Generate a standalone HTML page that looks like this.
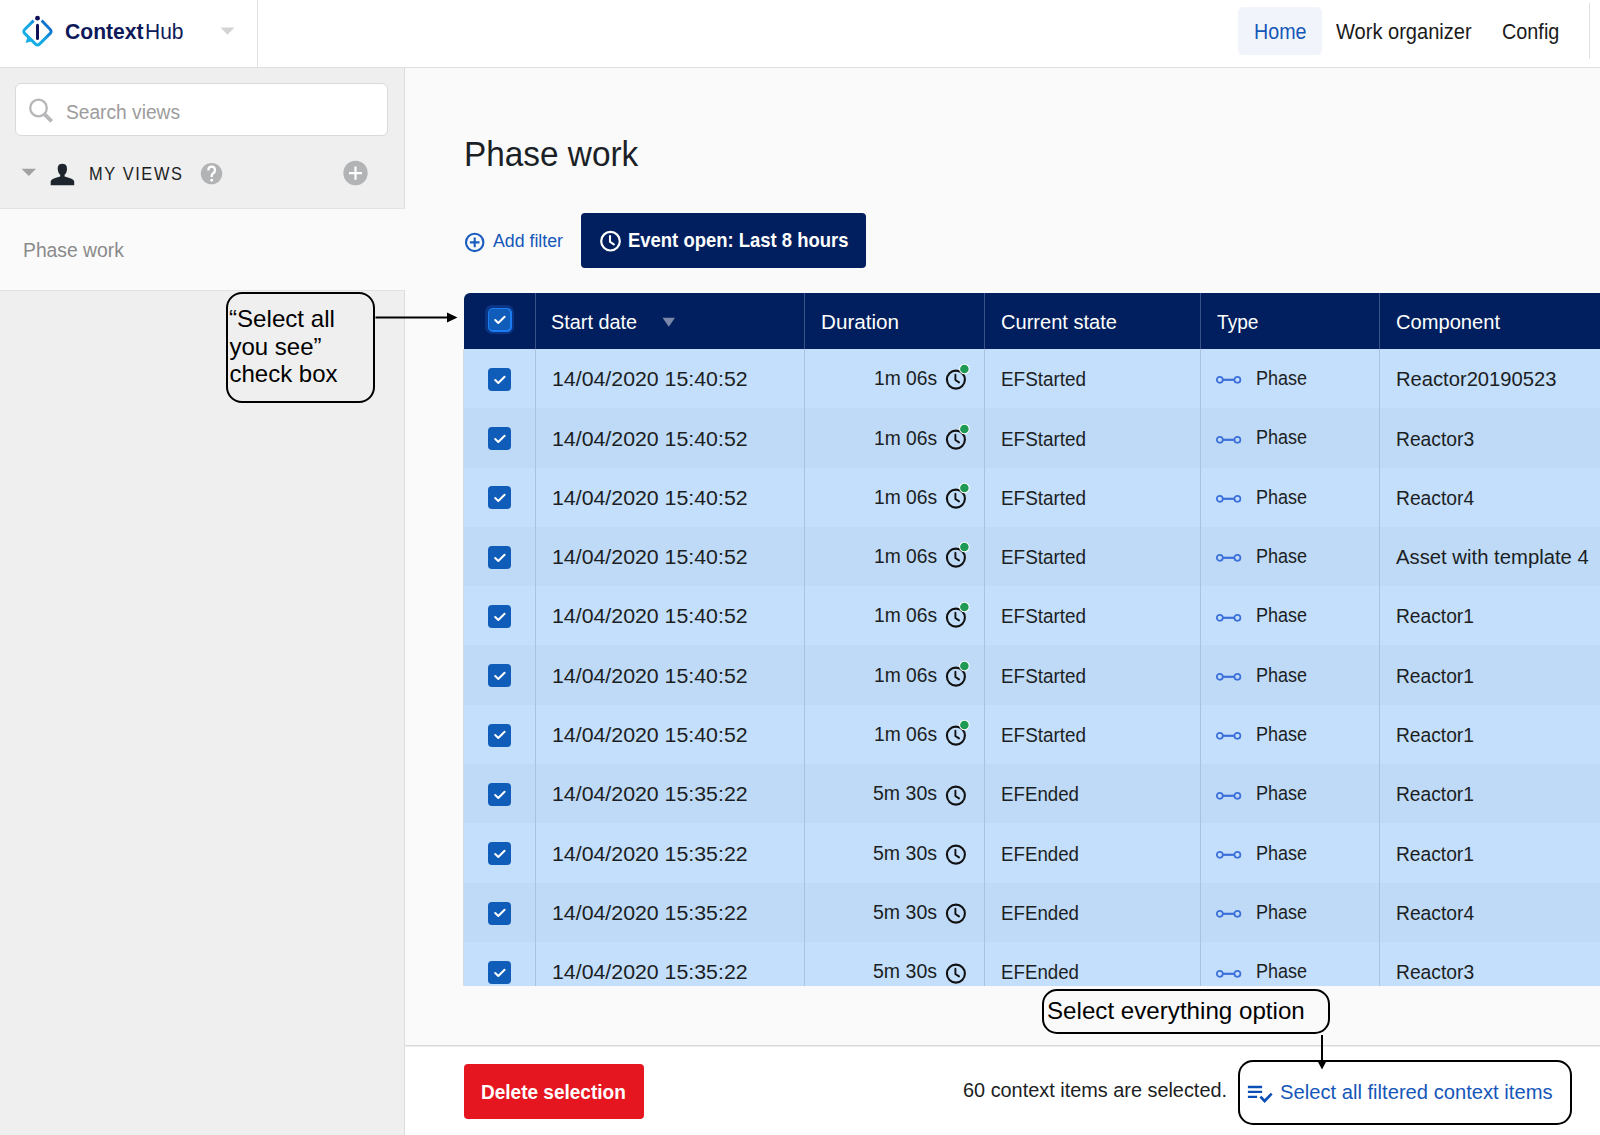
<!DOCTYPE html>
<html><head><meta charset="utf-8"><title>ContextHub - Phase work</title>
<style>
html,body{margin:0;padding:0;}
body{width:1600px;height:1135px;position:relative;overflow:hidden;background:#fafafa;font-family:"Liberation Sans",sans-serif;}
.r{position:absolute;}
.t{position:absolute;line-height:1;white-space:nowrap;transform-origin:0 0;}
svg.r{overflow:visible;}
</style></head><body>
<div class="r" style="left:0px;top:0px;width:1600px;height:67px;background:#ffffff;"></div>
<div class="r" style="left:0px;top:67px;width:1600px;height:1px;background:#dedede;"></div>
<div class="r" style="left:257px;top:0px;width:1px;height:67px;background:#e2e2e2;"></div>
<div class="r" style="left:1589px;top:3px;width:1px;height:56px;background:#e2e2e2;"></div>
<svg class="r" style="left:18px;top:13px" width="40" height="40" viewBox="0 0 40 40">
<defs><linearGradient id="lg" gradientUnits="userSpaceOnUse" x1="6" y1="32" x2="34" y2="4"><stop offset="0" stop-color="#16b4e6"/><stop offset="0.45" stop-color="#13a6e2"/><stop offset="1" stop-color="#0a49bd"/></linearGradient></defs>
<path d="M15.6 7.6 L6.9 16.2 Q4.7 18.4 6.9 20.6 L17.3 30.9 Q19.5 33.1 21.7 30.9 L32 20.6 Q34.2 18.4 32 16.2 L23.6 7.6" fill="none" stroke="url(#lg)" stroke-width="2.9" stroke-linejoin="round"/>
<path d="M9.6 23.6 L7.6 30 L13.8 28.3 Z" fill="#17b0e4"/>
<circle cx="19.5" cy="5.2" r="2.4" fill="#0e1058"/>
<path d="M19.5 12.3 V25.6" stroke="#0e1058" stroke-width="3" stroke-linecap="round"/>
</svg>
<div class="t " style="left:64.50px;top:21.38px;font-size:22px;color:#0e1a5a;font-weight:bold;transform:scaleX(0.9592);">Context</div>
<div class="t " style="left:145.00px;top:21.38px;font-size:22px;color:#0e1a5a;transform:scaleX(0.9537);">Hub</div>
<svg class="r" style="left:220px;top:27px" width="15" height="8"><path d="M0.5 0.5 L14.5 0.5 L7.5 7.8 Z" fill="#d3d3d3"/></svg>
<div class="r" style="left:1238px;top:7px;width:84px;height:48px;background:#f1f5fb;border-radius:5px;"></div>
<div class="t " style="left:1254.00px;top:20.88px;font-size:22px;color:#1556b9;transform:scaleX(0.8938);">Home</div>
<div class="t " style="left:1336.40px;top:20.88px;font-size:22px;color:#1a1a1a;transform:scaleX(0.9118);">Work organizer</div>
<div class="t " style="left:1501.70px;top:20.88px;font-size:22px;color:#1a1a1a;transform:scaleX(0.9012);">Config</div>
<div class="r" style="left:0px;top:68px;width:404px;height:141px;background:#efefef;"></div>
<div class="r" style="left:404px;top:68px;width:1px;height:141px;background:#dcdcdc;"></div>
<div class="r" style="left:0px;top:209px;width:404px;height:81px;background:#fafafa;"></div>
<div class="r" style="left:0px;top:208px;width:405px;height:1px;background:#e2e2e2;"></div>
<div class="r" style="left:0px;top:290px;width:404px;height:845px;background:#efefef;"></div>
<div class="r" style="left:0px;top:290px;width:405px;height:1px;background:#e2e2e2;"></div>
<div class="r" style="left:404px;top:290px;width:1px;height:845px;background:#dcdcdc;"></div>
<div class="r" style="left:15px;top:83px;width:373px;height:53px;background:#ffffff;border:1px solid #dadada;border-radius:6px;box-sizing:border-box;"></div>
<svg class="r" style="left:26px;top:96px" width="30" height="30"><circle cx="12.5" cy="12" r="8.3" fill="none" stroke="#b6b7b9" stroke-width="2.3"/><path d="M17.6 17.3 L25.7 25.4" stroke="#b6b7b9" stroke-width="3.8"/></svg>
<div class="t " style="left:66.00px;top:101.77px;font-size:20px;color:#9c9c9c;transform:scaleX(0.9588);">Search views</div>
<svg class="r" style="left:21px;top:168px" width="16" height="9"><path d="M0.5 0.8 L15 0.8 L7.8 8 Z" fill="#a2a2a2"/></svg>
<svg class="r" style="left:50px;top:163px" width="25" height="23" viewBox="0 0 25 23"><path d="M12.3 0.7 C8.3 0.7 7.6 3.6 7.8 6.4 C8 9 9.2 11 10.2 11.8 L10.2 13.6 C5.6 14.6 1.4 16.4 0.7 18.2 L0.7 22.3 L24.2 22.3 L24.2 18.2 C23.5 16.4 19.3 14.6 14.6 13.6 L14.6 11.8 C15.6 11 16.8 9 17 6.4 C17.2 3.6 16.4 0.7 12.3 0.7 Z" fill="#1f252c"/></svg>
<div class="t " style="left:89.30px;top:166.23px;font-size:17.8px;color:#1b1e23;letter-spacing:1.765px;transform:scaleX(0.9200);">MY VIEWS</div>
<svg class="r" style="left:200px;top:162px" width="24" height="24"><circle cx="11.5" cy="11.6" r="10.7" fill="#b2b3b5"/><path d="M8.3 8.6 Q8.3 4.6 11.6 4.6 Q15 4.6 15 8.2 Q15 10.3 13 11.5 Q11.7 12.4 11.7 14 V15" fill="none" stroke="#fff" stroke-width="2.3"/><circle cx="11.7" cy="18.3" r="1.45" fill="#fff"/></svg>
<svg class="r" style="left:342px;top:160px" width="27" height="27"><circle cx="13.5" cy="13" r="12.2" fill="#b2b3b5"/><path d="M13.5 6.5 V19.7 M7 13.1 H20" stroke="#ffffff" stroke-width="2.2"/></svg>
<div class="t " style="left:23.10px;top:240.45px;font-size:20.5px;color:#8a8a8a;transform:scaleX(0.9420);">Phase work</div>
<div class="r" style="left:405px;top:68px;width:1195px;height:978px;background:#fafafa;"></div>
<div class="t " style="left:464.20px;top:136.37px;font-size:35px;color:#1b1f26;transform:scaleX(0.9527);">Phase work</div>
<svg class="r" style="left:463px;top:231px" width="24" height="24"><circle cx="11.7" cy="11.4" r="8.7" fill="none" stroke="#1a5cbf" stroke-width="2.1"/><path d="M11.7 6.6 V16.2 M6.9 11.4 H16.5" stroke="#1a5cbf" stroke-width="2.1"/></svg>
<div class="t " style="left:493.00px;top:232.26px;font-size:18px;color:#1556b9;transform:scaleX(0.9858);">Add filter</div>
<div class="r" style="left:581px;top:213px;width:285px;height:54.5px;background:#011f5e;border-radius:4px;"></div>
<svg class="r" style="left:598px;top:229px" width="25" height="25"><circle cx="12.5" cy="12.2" r="9.3" fill="none" stroke="#fff" stroke-width="2.2"/><path d="M12 7 V12.8 L15.8 15.4" fill="none" stroke="#fff" stroke-width="2.1" stroke-linecap="round"/></svg>
<div class="t " style="left:628.20px;top:230.15px;font-size:20.5px;color:#ffffff;font-weight:bold;transform:scaleX(0.9005);">Event open: Last 8 hours</div>
<div class="r" style="left:463.6px;top:348px;width:1136.4px;height:60px;background:#c4dffc;"></div>
<div class="r" style="left:463.6px;top:408px;width:1136.4px;height:60px;background:#bfdaf7;"></div>
<div class="r" style="left:463.6px;top:468px;width:1136.4px;height:59px;background:#c4dffc;"></div>
<div class="r" style="left:463.6px;top:527px;width:1136.4px;height:59px;background:#bfdaf7;"></div>
<div class="r" style="left:463.6px;top:586px;width:1136.4px;height:59px;background:#c4dffc;"></div>
<div class="r" style="left:463.6px;top:645px;width:1136.4px;height:60px;background:#bfdaf7;"></div>
<div class="r" style="left:463.6px;top:705px;width:1136.4px;height:59px;background:#c4dffc;"></div>
<div class="r" style="left:463.6px;top:764px;width:1136.4px;height:59px;background:#bfdaf7;"></div>
<div class="r" style="left:463.6px;top:823px;width:1136.4px;height:60px;background:#c4dffc;"></div>
<div class="r" style="left:463.6px;top:883px;width:1136.4px;height:59px;background:#bfdaf7;"></div>
<div class="r" style="left:463.6px;top:942px;width:1136.4px;height:44px;background:#c4dffc;"></div>
<div class="r" style="left:463.6px;top:292.6px;width:1136.4px;height:56.2px;background:#011f5e;border-top-left-radius:6px;"></div>
<div class="r" style="left:463px;top:348.9px;width:1px;height:637.4px;background:#d0dbe6;"></div>
<div class="r" style="left:535px;top:292.6px;width:1px;height:56.2px;background:#3b5287;"></div>
<div class="r" style="left:535px;top:348.9px;width:1px;height:637.4px;background:#a9c3df;"></div>
<div class="r" style="left:804px;top:292.6px;width:1px;height:56.2px;background:#3b5287;"></div>
<div class="r" style="left:804px;top:348.9px;width:1px;height:637.4px;background:#a9c3df;"></div>
<div class="r" style="left:984px;top:292.6px;width:1px;height:56.2px;background:#3b5287;"></div>
<div class="r" style="left:984px;top:348.9px;width:1px;height:637.4px;background:#a9c3df;"></div>
<div class="r" style="left:1200px;top:292.6px;width:1px;height:56.2px;background:#3b5287;"></div>
<div class="r" style="left:1200px;top:348.9px;width:1px;height:637.4px;background:#a9c3df;"></div>
<div class="r" style="left:1379px;top:292.6px;width:1px;height:56.2px;background:#3b5287;"></div>
<div class="r" style="left:1379px;top:348.9px;width:1px;height:637.4px;background:#a9c3df;"></div>
<div class="r" style="left:485px;top:305px;width:29px;height:29px;background:#0a3585;border-radius:7px;"></div>
<div class="r" style="left:487.5px;top:307.5px;width:24px;height:24px;background:#1e7cf2;border-radius:5px;"></div>
<div class="r" style="left:489px;top:309px;width:21px;height:21px;background:#0f5cb9;border-radius:4px;"></div>
<svg class="r" style="left:487.5px;top:307.5px" width="24" height="24"><path d="M7.2 12 L10.3 15 L16.6 8.7" fill="none" stroke="#fff" stroke-width="2" stroke-linecap="round" stroke-linejoin="round"/></svg>
<div class="t " style="left:551.30px;top:311.55px;font-size:20.5px;color:#ffffff;transform:scaleX(0.9677);">Start date</div>
<svg class="r" style="left:662px;top:317px" width="14" height="11"><path d="M0.6 0.8 L13 0.8 L6.8 9.8 Z" fill="#7b87a9"/></svg>
<div class="t " style="left:820.50px;top:311.55px;font-size:20.5px;color:#ffffff;transform:scaleX(1.0066);">Duration</div>
<div class="t " style="left:1000.50px;top:311.55px;font-size:20.5px;color:#ffffff;transform:scaleX(0.9790);">Current state</div>
<div class="t " style="left:1216.50px;top:311.55px;font-size:20.5px;color:#ffffff;transform:scaleX(0.9329);">Type</div>
<div class="t " style="left:1395.50px;top:311.55px;font-size:20.5px;color:#ffffff;transform:scaleX(0.9813);">Component</div>
<div class="r" style="left:488px;top:367.8px;width:23px;height:23px;background:#0f5cb9;border-radius:4px;"></div>
<svg class="r" style="left:487.5px;top:367.60px" width="24" height="24"><path d="M7.2 12 L10.3 15 L16.6 8.7" fill="none" stroke="#fff" stroke-width="2" stroke-linecap="round" stroke-linejoin="round"/></svg>
<div class="t " style="left:552.40px;top:369.25px;font-size:20.5px;color:#1b1e23;transform:scaleX(1.0399);">14/04/2020 15:40:52</div>
<div class="t " style="left:873.50px;top:368.25px;font-size:20.5px;color:#1b1e23;transform:scaleX(0.9399);">1m 06s</div>
<svg class="r" style="left:943px;top:367.40px" width="26" height="26"><circle cx="12.9" cy="12.6" r="9" fill="none" stroke="#111" stroke-width="2.1"/><path d="M12.4 7.8 V13.1 L16 15.4" fill="none" stroke="#111" stroke-width="1.9" stroke-linecap="round"/><circle cx="21.4" cy="2.0" r="5.3" fill="#fff"/><circle cx="21.4" cy="2.0" r="4.3" fill="#1f9a55"/></svg>
<div class="t " style="left:1001.20px;top:369.25px;font-size:20.5px;color:#1b1e23;transform:scaleX(0.9214);">EFStarted</div>
<svg class="r" style="left:1214px;top:374.40px" width="30" height="12"><circle cx="5.8" cy="5.8" r="3" fill="none" stroke="#3b6fd9" stroke-width="1.7"/><circle cx="23.4" cy="5.8" r="3" fill="none" stroke="#3b6fd9" stroke-width="1.7"/><path d="M8.8 5.8 H20.4" stroke="#3b6fd9" stroke-width="2.2"/></svg>
<div class="t " style="left:1256.00px;top:368.05px;font-size:20.5px;color:#1b1e23;transform:scaleX(0.8775);">Phase</div>
<div class="t " style="left:1396.20px;top:369.25px;font-size:20.5px;color:#1b1e23;transform:scaleX(0.9842);">Reactor20190523</div>
<div class="r" style="left:488px;top:427.11px;width:23px;height:23px;background:#0f5cb9;border-radius:4px;"></div>
<svg class="r" style="left:487.5px;top:426.91px" width="24" height="24"><path d="M7.2 12 L10.3 15 L16.6 8.7" fill="none" stroke="#fff" stroke-width="2" stroke-linecap="round" stroke-linejoin="round"/></svg>
<div class="t " style="left:552.40px;top:428.56px;font-size:20.5px;color:#1b1e23;transform:scaleX(1.0399);">14/04/2020 15:40:52</div>
<div class="t " style="left:873.50px;top:427.56px;font-size:20.5px;color:#1b1e23;transform:scaleX(0.9399);">1m 06s</div>
<svg class="r" style="left:943px;top:426.71px" width="26" height="26"><circle cx="12.9" cy="12.6" r="9" fill="none" stroke="#111" stroke-width="2.1"/><path d="M12.4 7.8 V13.1 L16 15.4" fill="none" stroke="#111" stroke-width="1.9" stroke-linecap="round"/><circle cx="21.4" cy="2.0" r="5.3" fill="#fff"/><circle cx="21.4" cy="2.0" r="4.3" fill="#1f9a55"/></svg>
<div class="t " style="left:1001.20px;top:428.56px;font-size:20.5px;color:#1b1e23;transform:scaleX(0.9214);">EFStarted</div>
<svg class="r" style="left:1214px;top:433.71px" width="30" height="12"><circle cx="5.8" cy="5.8" r="3" fill="none" stroke="#3b6fd9" stroke-width="1.7"/><circle cx="23.4" cy="5.8" r="3" fill="none" stroke="#3b6fd9" stroke-width="1.7"/><path d="M8.8 5.8 H20.4" stroke="#3b6fd9" stroke-width="2.2"/></svg>
<div class="t " style="left:1256.00px;top:427.36px;font-size:20.5px;color:#1b1e23;transform:scaleX(0.8775);">Phase</div>
<div class="t " style="left:1396.20px;top:428.56px;font-size:20.5px;color:#1b1e23;transform:scaleX(0.9396);">Reactor3</div>
<div class="r" style="left:488px;top:486.42px;width:23px;height:23px;background:#0f5cb9;border-radius:4px;"></div>
<svg class="r" style="left:487.5px;top:486.22px" width="24" height="24"><path d="M7.2 12 L10.3 15 L16.6 8.7" fill="none" stroke="#fff" stroke-width="2" stroke-linecap="round" stroke-linejoin="round"/></svg>
<div class="t " style="left:552.40px;top:487.87px;font-size:20.5px;color:#1b1e23;transform:scaleX(1.0399);">14/04/2020 15:40:52</div>
<div class="t " style="left:873.50px;top:486.87px;font-size:20.5px;color:#1b1e23;transform:scaleX(0.9399);">1m 06s</div>
<svg class="r" style="left:943px;top:486.02px" width="26" height="26"><circle cx="12.9" cy="12.6" r="9" fill="none" stroke="#111" stroke-width="2.1"/><path d="M12.4 7.8 V13.1 L16 15.4" fill="none" stroke="#111" stroke-width="1.9" stroke-linecap="round"/><circle cx="21.4" cy="2.0" r="5.3" fill="#fff"/><circle cx="21.4" cy="2.0" r="4.3" fill="#1f9a55"/></svg>
<div class="t " style="left:1001.20px;top:487.87px;font-size:20.5px;color:#1b1e23;transform:scaleX(0.9214);">EFStarted</div>
<svg class="r" style="left:1214px;top:493.02px" width="30" height="12"><circle cx="5.8" cy="5.8" r="3" fill="none" stroke="#3b6fd9" stroke-width="1.7"/><circle cx="23.4" cy="5.8" r="3" fill="none" stroke="#3b6fd9" stroke-width="1.7"/><path d="M8.8 5.8 H20.4" stroke="#3b6fd9" stroke-width="2.2"/></svg>
<div class="t " style="left:1256.00px;top:486.67px;font-size:20.5px;color:#1b1e23;transform:scaleX(0.8775);">Phase</div>
<div class="t " style="left:1396.20px;top:487.87px;font-size:20.5px;color:#1b1e23;transform:scaleX(0.9396);">Reactor4</div>
<div class="r" style="left:488px;top:545.73px;width:23px;height:23px;background:#0f5cb9;border-radius:4px;"></div>
<svg class="r" style="left:487.5px;top:545.53px" width="24" height="24"><path d="M7.2 12 L10.3 15 L16.6 8.7" fill="none" stroke="#fff" stroke-width="2" stroke-linecap="round" stroke-linejoin="round"/></svg>
<div class="t " style="left:552.40px;top:547.18px;font-size:20.5px;color:#1b1e23;transform:scaleX(1.0399);">14/04/2020 15:40:52</div>
<div class="t " style="left:873.50px;top:546.18px;font-size:20.5px;color:#1b1e23;transform:scaleX(0.9399);">1m 06s</div>
<svg class="r" style="left:943px;top:545.33px" width="26" height="26"><circle cx="12.9" cy="12.6" r="9" fill="none" stroke="#111" stroke-width="2.1"/><path d="M12.4 7.8 V13.1 L16 15.4" fill="none" stroke="#111" stroke-width="1.9" stroke-linecap="round"/><circle cx="21.4" cy="2.0" r="5.3" fill="#fff"/><circle cx="21.4" cy="2.0" r="4.3" fill="#1f9a55"/></svg>
<div class="t " style="left:1001.20px;top:547.18px;font-size:20.5px;color:#1b1e23;transform:scaleX(0.9214);">EFStarted</div>
<svg class="r" style="left:1214px;top:552.33px" width="30" height="12"><circle cx="5.8" cy="5.8" r="3" fill="none" stroke="#3b6fd9" stroke-width="1.7"/><circle cx="23.4" cy="5.8" r="3" fill="none" stroke="#3b6fd9" stroke-width="1.7"/><path d="M8.8 5.8 H20.4" stroke="#3b6fd9" stroke-width="2.2"/></svg>
<div class="t " style="left:1256.00px;top:545.98px;font-size:20.5px;color:#1b1e23;transform:scaleX(0.8775);">Phase</div>
<div class="t " style="left:1396.20px;top:547.18px;font-size:20.5px;color:#1b1e23;transform:scaleX(0.9895);">Asset with template 4</div>
<div class="r" style="left:488px;top:605.04px;width:23px;height:23px;background:#0f5cb9;border-radius:4px;"></div>
<svg class="r" style="left:487.5px;top:604.84px" width="24" height="24"><path d="M7.2 12 L10.3 15 L16.6 8.7" fill="none" stroke="#fff" stroke-width="2" stroke-linecap="round" stroke-linejoin="round"/></svg>
<div class="t " style="left:552.40px;top:606.49px;font-size:20.5px;color:#1b1e23;transform:scaleX(1.0399);">14/04/2020 15:40:52</div>
<div class="t " style="left:873.50px;top:605.49px;font-size:20.5px;color:#1b1e23;transform:scaleX(0.9399);">1m 06s</div>
<svg class="r" style="left:943px;top:604.64px" width="26" height="26"><circle cx="12.9" cy="12.6" r="9" fill="none" stroke="#111" stroke-width="2.1"/><path d="M12.4 7.8 V13.1 L16 15.4" fill="none" stroke="#111" stroke-width="1.9" stroke-linecap="round"/><circle cx="21.4" cy="2.0" r="5.3" fill="#fff"/><circle cx="21.4" cy="2.0" r="4.3" fill="#1f9a55"/></svg>
<div class="t " style="left:1001.20px;top:606.49px;font-size:20.5px;color:#1b1e23;transform:scaleX(0.9214);">EFStarted</div>
<svg class="r" style="left:1214px;top:611.64px" width="30" height="12"><circle cx="5.8" cy="5.8" r="3" fill="none" stroke="#3b6fd9" stroke-width="1.7"/><circle cx="23.4" cy="5.8" r="3" fill="none" stroke="#3b6fd9" stroke-width="1.7"/><path d="M8.8 5.8 H20.4" stroke="#3b6fd9" stroke-width="2.2"/></svg>
<div class="t " style="left:1256.00px;top:605.29px;font-size:20.5px;color:#1b1e23;transform:scaleX(0.8775);">Phase</div>
<div class="t " style="left:1396.20px;top:606.49px;font-size:20.5px;color:#1b1e23;transform:scaleX(0.9372);">Reactor1</div>
<div class="r" style="left:488px;top:664.35px;width:23px;height:23px;background:#0f5cb9;border-radius:4px;"></div>
<svg class="r" style="left:487.5px;top:664.15px" width="24" height="24"><path d="M7.2 12 L10.3 15 L16.6 8.7" fill="none" stroke="#fff" stroke-width="2" stroke-linecap="round" stroke-linejoin="round"/></svg>
<div class="t " style="left:552.40px;top:665.80px;font-size:20.5px;color:#1b1e23;transform:scaleX(1.0399);">14/04/2020 15:40:52</div>
<div class="t " style="left:873.50px;top:664.80px;font-size:20.5px;color:#1b1e23;transform:scaleX(0.9399);">1m 06s</div>
<svg class="r" style="left:943px;top:663.95px" width="26" height="26"><circle cx="12.9" cy="12.6" r="9" fill="none" stroke="#111" stroke-width="2.1"/><path d="M12.4 7.8 V13.1 L16 15.4" fill="none" stroke="#111" stroke-width="1.9" stroke-linecap="round"/><circle cx="21.4" cy="2.0" r="5.3" fill="#fff"/><circle cx="21.4" cy="2.0" r="4.3" fill="#1f9a55"/></svg>
<div class="t " style="left:1001.20px;top:665.80px;font-size:20.5px;color:#1b1e23;transform:scaleX(0.9214);">EFStarted</div>
<svg class="r" style="left:1214px;top:670.95px" width="30" height="12"><circle cx="5.8" cy="5.8" r="3" fill="none" stroke="#3b6fd9" stroke-width="1.7"/><circle cx="23.4" cy="5.8" r="3" fill="none" stroke="#3b6fd9" stroke-width="1.7"/><path d="M8.8 5.8 H20.4" stroke="#3b6fd9" stroke-width="2.2"/></svg>
<div class="t " style="left:1256.00px;top:664.60px;font-size:20.5px;color:#1b1e23;transform:scaleX(0.8775);">Phase</div>
<div class="t " style="left:1396.20px;top:665.80px;font-size:20.5px;color:#1b1e23;transform:scaleX(0.9372);">Reactor1</div>
<div class="r" style="left:488px;top:723.66px;width:23px;height:23px;background:#0f5cb9;border-radius:4px;"></div>
<svg class="r" style="left:487.5px;top:723.46px" width="24" height="24"><path d="M7.2 12 L10.3 15 L16.6 8.7" fill="none" stroke="#fff" stroke-width="2" stroke-linecap="round" stroke-linejoin="round"/></svg>
<div class="t " style="left:552.40px;top:725.11px;font-size:20.5px;color:#1b1e23;transform:scaleX(1.0399);">14/04/2020 15:40:52</div>
<div class="t " style="left:873.50px;top:724.11px;font-size:20.5px;color:#1b1e23;transform:scaleX(0.9399);">1m 06s</div>
<svg class="r" style="left:943px;top:723.26px" width="26" height="26"><circle cx="12.9" cy="12.6" r="9" fill="none" stroke="#111" stroke-width="2.1"/><path d="M12.4 7.8 V13.1 L16 15.4" fill="none" stroke="#111" stroke-width="1.9" stroke-linecap="round"/><circle cx="21.4" cy="2.0" r="5.3" fill="#fff"/><circle cx="21.4" cy="2.0" r="4.3" fill="#1f9a55"/></svg>
<div class="t " style="left:1001.20px;top:725.11px;font-size:20.5px;color:#1b1e23;transform:scaleX(0.9214);">EFStarted</div>
<svg class="r" style="left:1214px;top:730.26px" width="30" height="12"><circle cx="5.8" cy="5.8" r="3" fill="none" stroke="#3b6fd9" stroke-width="1.7"/><circle cx="23.4" cy="5.8" r="3" fill="none" stroke="#3b6fd9" stroke-width="1.7"/><path d="M8.8 5.8 H20.4" stroke="#3b6fd9" stroke-width="2.2"/></svg>
<div class="t " style="left:1256.00px;top:723.91px;font-size:20.5px;color:#1b1e23;transform:scaleX(0.8775);">Phase</div>
<div class="t " style="left:1396.20px;top:725.11px;font-size:20.5px;color:#1b1e23;transform:scaleX(0.9372);">Reactor1</div>
<div class="r" style="left:488px;top:782.97px;width:23px;height:23px;background:#0f5cb9;border-radius:4px;"></div>
<svg class="r" style="left:487.5px;top:782.77px" width="24" height="24"><path d="M7.2 12 L10.3 15 L16.6 8.7" fill="none" stroke="#fff" stroke-width="2" stroke-linecap="round" stroke-linejoin="round"/></svg>
<div class="t " style="left:552.40px;top:784.42px;font-size:20.5px;color:#1b1e23;transform:scaleX(1.0399);">14/04/2020 15:35:22</div>
<div class="t " style="left:872.50px;top:783.42px;font-size:20.5px;color:#1b1e23;transform:scaleX(0.9518);">5m 30s</div>
<svg class="r" style="left:943px;top:782.57px" width="26" height="26"><circle cx="12.9" cy="12.6" r="9" fill="none" stroke="#111" stroke-width="2.1"/><path d="M12.4 7.8 V13.1 L16 15.4" fill="none" stroke="#111" stroke-width="1.9" stroke-linecap="round"/></svg>
<div class="t " style="left:1000.50px;top:784.42px;font-size:20.5px;color:#1b1e23;transform:scaleX(0.9124);">EFEnded</div>
<svg class="r" style="left:1214px;top:789.57px" width="30" height="12"><circle cx="5.8" cy="5.8" r="3" fill="none" stroke="#3b6fd9" stroke-width="1.7"/><circle cx="23.4" cy="5.8" r="3" fill="none" stroke="#3b6fd9" stroke-width="1.7"/><path d="M8.8 5.8 H20.4" stroke="#3b6fd9" stroke-width="2.2"/></svg>
<div class="t " style="left:1256.00px;top:783.22px;font-size:20.5px;color:#1b1e23;transform:scaleX(0.8775);">Phase</div>
<div class="t " style="left:1396.20px;top:784.42px;font-size:20.5px;color:#1b1e23;transform:scaleX(0.9372);">Reactor1</div>
<div class="r" style="left:488px;top:842.28px;width:23px;height:23px;background:#0f5cb9;border-radius:4px;"></div>
<svg class="r" style="left:487.5px;top:842.08px" width="24" height="24"><path d="M7.2 12 L10.3 15 L16.6 8.7" fill="none" stroke="#fff" stroke-width="2" stroke-linecap="round" stroke-linejoin="round"/></svg>
<div class="t " style="left:552.40px;top:843.73px;font-size:20.5px;color:#1b1e23;transform:scaleX(1.0399);">14/04/2020 15:35:22</div>
<div class="t " style="left:872.50px;top:842.73px;font-size:20.5px;color:#1b1e23;transform:scaleX(0.9518);">5m 30s</div>
<svg class="r" style="left:943px;top:841.88px" width="26" height="26"><circle cx="12.9" cy="12.6" r="9" fill="none" stroke="#111" stroke-width="2.1"/><path d="M12.4 7.8 V13.1 L16 15.4" fill="none" stroke="#111" stroke-width="1.9" stroke-linecap="round"/></svg>
<div class="t " style="left:1000.50px;top:843.73px;font-size:20.5px;color:#1b1e23;transform:scaleX(0.9124);">EFEnded</div>
<svg class="r" style="left:1214px;top:848.88px" width="30" height="12"><circle cx="5.8" cy="5.8" r="3" fill="none" stroke="#3b6fd9" stroke-width="1.7"/><circle cx="23.4" cy="5.8" r="3" fill="none" stroke="#3b6fd9" stroke-width="1.7"/><path d="M8.8 5.8 H20.4" stroke="#3b6fd9" stroke-width="2.2"/></svg>
<div class="t " style="left:1256.00px;top:842.53px;font-size:20.5px;color:#1b1e23;transform:scaleX(0.8775);">Phase</div>
<div class="t " style="left:1396.20px;top:843.73px;font-size:20.5px;color:#1b1e23;transform:scaleX(0.9372);">Reactor1</div>
<div class="r" style="left:488px;top:901.59px;width:23px;height:23px;background:#0f5cb9;border-radius:4px;"></div>
<svg class="r" style="left:487.5px;top:901.39px" width="24" height="24"><path d="M7.2 12 L10.3 15 L16.6 8.7" fill="none" stroke="#fff" stroke-width="2" stroke-linecap="round" stroke-linejoin="round"/></svg>
<div class="t " style="left:552.40px;top:903.04px;font-size:20.5px;color:#1b1e23;transform:scaleX(1.0399);">14/04/2020 15:35:22</div>
<div class="t " style="left:872.50px;top:902.04px;font-size:20.5px;color:#1b1e23;transform:scaleX(0.9518);">5m 30s</div>
<svg class="r" style="left:943px;top:901.19px" width="26" height="26"><circle cx="12.9" cy="12.6" r="9" fill="none" stroke="#111" stroke-width="2.1"/><path d="M12.4 7.8 V13.1 L16 15.4" fill="none" stroke="#111" stroke-width="1.9" stroke-linecap="round"/></svg>
<div class="t " style="left:1000.50px;top:903.04px;font-size:20.5px;color:#1b1e23;transform:scaleX(0.9124);">EFEnded</div>
<svg class="r" style="left:1214px;top:908.19px" width="30" height="12"><circle cx="5.8" cy="5.8" r="3" fill="none" stroke="#3b6fd9" stroke-width="1.7"/><circle cx="23.4" cy="5.8" r="3" fill="none" stroke="#3b6fd9" stroke-width="1.7"/><path d="M8.8 5.8 H20.4" stroke="#3b6fd9" stroke-width="2.2"/></svg>
<div class="t " style="left:1256.00px;top:901.84px;font-size:20.5px;color:#1b1e23;transform:scaleX(0.8775);">Phase</div>
<div class="t " style="left:1396.20px;top:903.04px;font-size:20.5px;color:#1b1e23;transform:scaleX(0.9396);">Reactor4</div>
<div class="r" style="left:488px;top:960.9px;width:23px;height:23px;background:#0f5cb9;border-radius:4px;"></div>
<svg class="r" style="left:487.5px;top:960.70px" width="24" height="24"><path d="M7.2 12 L10.3 15 L16.6 8.7" fill="none" stroke="#fff" stroke-width="2" stroke-linecap="round" stroke-linejoin="round"/></svg>
<div class="t " style="left:552.40px;top:962.35px;font-size:20.5px;color:#1b1e23;transform:scaleX(1.0399);">14/04/2020 15:35:22</div>
<div class="t " style="left:872.50px;top:961.35px;font-size:20.5px;color:#1b1e23;transform:scaleX(0.9518);">5m 30s</div>
<svg class="r" style="left:943px;top:960.50px" width="26" height="26"><circle cx="12.9" cy="12.6" r="9" fill="none" stroke="#111" stroke-width="2.1"/><path d="M12.4 7.8 V13.1 L16 15.4" fill="none" stroke="#111" stroke-width="1.9" stroke-linecap="round"/></svg>
<div class="t " style="left:1000.50px;top:962.35px;font-size:20.5px;color:#1b1e23;transform:scaleX(0.9124);">EFEnded</div>
<svg class="r" style="left:1214px;top:967.50px" width="30" height="12"><circle cx="5.8" cy="5.8" r="3" fill="none" stroke="#3b6fd9" stroke-width="1.7"/><circle cx="23.4" cy="5.8" r="3" fill="none" stroke="#3b6fd9" stroke-width="1.7"/><path d="M8.8 5.8 H20.4" stroke="#3b6fd9" stroke-width="2.2"/></svg>
<div class="t " style="left:1256.00px;top:961.15px;font-size:20.5px;color:#1b1e23;transform:scaleX(0.8775);">Phase</div>
<div class="t " style="left:1396.20px;top:962.35px;font-size:20.5px;color:#1b1e23;transform:scaleX(0.9396);">Reactor3</div>
<div class="r" style="left:405px;top:1045px;width:1195px;height:1px;background:#d9d9d9;"></div>
<div class="r" style="left:405px;top:1046px;width:1195px;height:1px;background:#ececec;"></div>
<div class="r" style="left:405px;top:1047px;width:1195px;height:88px;background:#ffffff;"></div>
<div class="r" style="left:463.7px;top:1064px;width:180px;height:54.7px;background:#e5161f;border-radius:4px;"></div>
<div class="t " style="left:480.70px;top:1082.05px;font-size:20.5px;color:#ffffff;font-weight:bold;transform:scaleX(0.9276);">Delete selection</div>
<div class="t " style="left:962.70px;top:1079.55px;font-size:20.5px;color:#1b1e23;transform:scaleX(0.9694);">60 context items are selected.</div>
<svg class="r" style="left:1246px;top:1082px" width="30" height="24"><path d="M1.9 5 H16.1 M1.9 9.9 H16.1 M1.9 14.8 H11.1" stroke="#0b4fb6" stroke-width="2.3"/><path d="M14.4 14.6 L18.6 19 L25.7 11.6" fill="none" stroke="#0b4fb6" stroke-width="2.6"/></svg>
<div class="t " style="left:1280.20px;top:1081.65px;font-size:20.5px;color:#1556b9;transform:scaleX(0.9843);">Select all filtered context items</div>
<div class="r" style="left:226px;top:292px;width:148.7px;height:110.5px;background:transparent;border:2.4px solid #000;border-radius:16px;box-sizing:border-box;"></div>
<div class="t " style="left:228.90px;top:306.98px;font-size:24px;color:#000;transform:scaleX(1.0051);">“Select all</div>
<div class="t " style="left:229.50px;top:334.58px;font-size:24px;color:#000;">you see”</div>
<div class="t " style="left:229.50px;top:362.08px;font-size:24px;color:#000;">check box</div>
<svg class="r" style="left:374px;top:310px" width="86" height="16"><path d="M1.5 7.6 H76" stroke="#000" stroke-width="2"/><path d="M73 2.6 L83.5 7.6 L73 12.6 Z" fill="#000"/></svg>
<div class="r" style="left:1041.6px;top:989px;width:288.4px;height:45px;background:transparent;border:2.4px solid #000;border-radius:15px;box-sizing:border-box;"></div>
<div class="t " style="left:1047.40px;top:999.28px;font-size:24px;color:#000;transform:scaleX(1.0062);">Select everything option</div>
<div class="r" style="left:1238px;top:1060.3px;width:334px;height:65px;background:transparent;border:2.4px solid #000;border-radius:15px;box-sizing:border-box;"></div>
<svg class="r" style="left:1314px;top:1034px" width="16" height="38"><path d="M8 1 V30" stroke="#000" stroke-width="2"/><path d="M3.5 27 L8 35.5 L12.5 27 Z" fill="#000"/></svg>
</body></html>
